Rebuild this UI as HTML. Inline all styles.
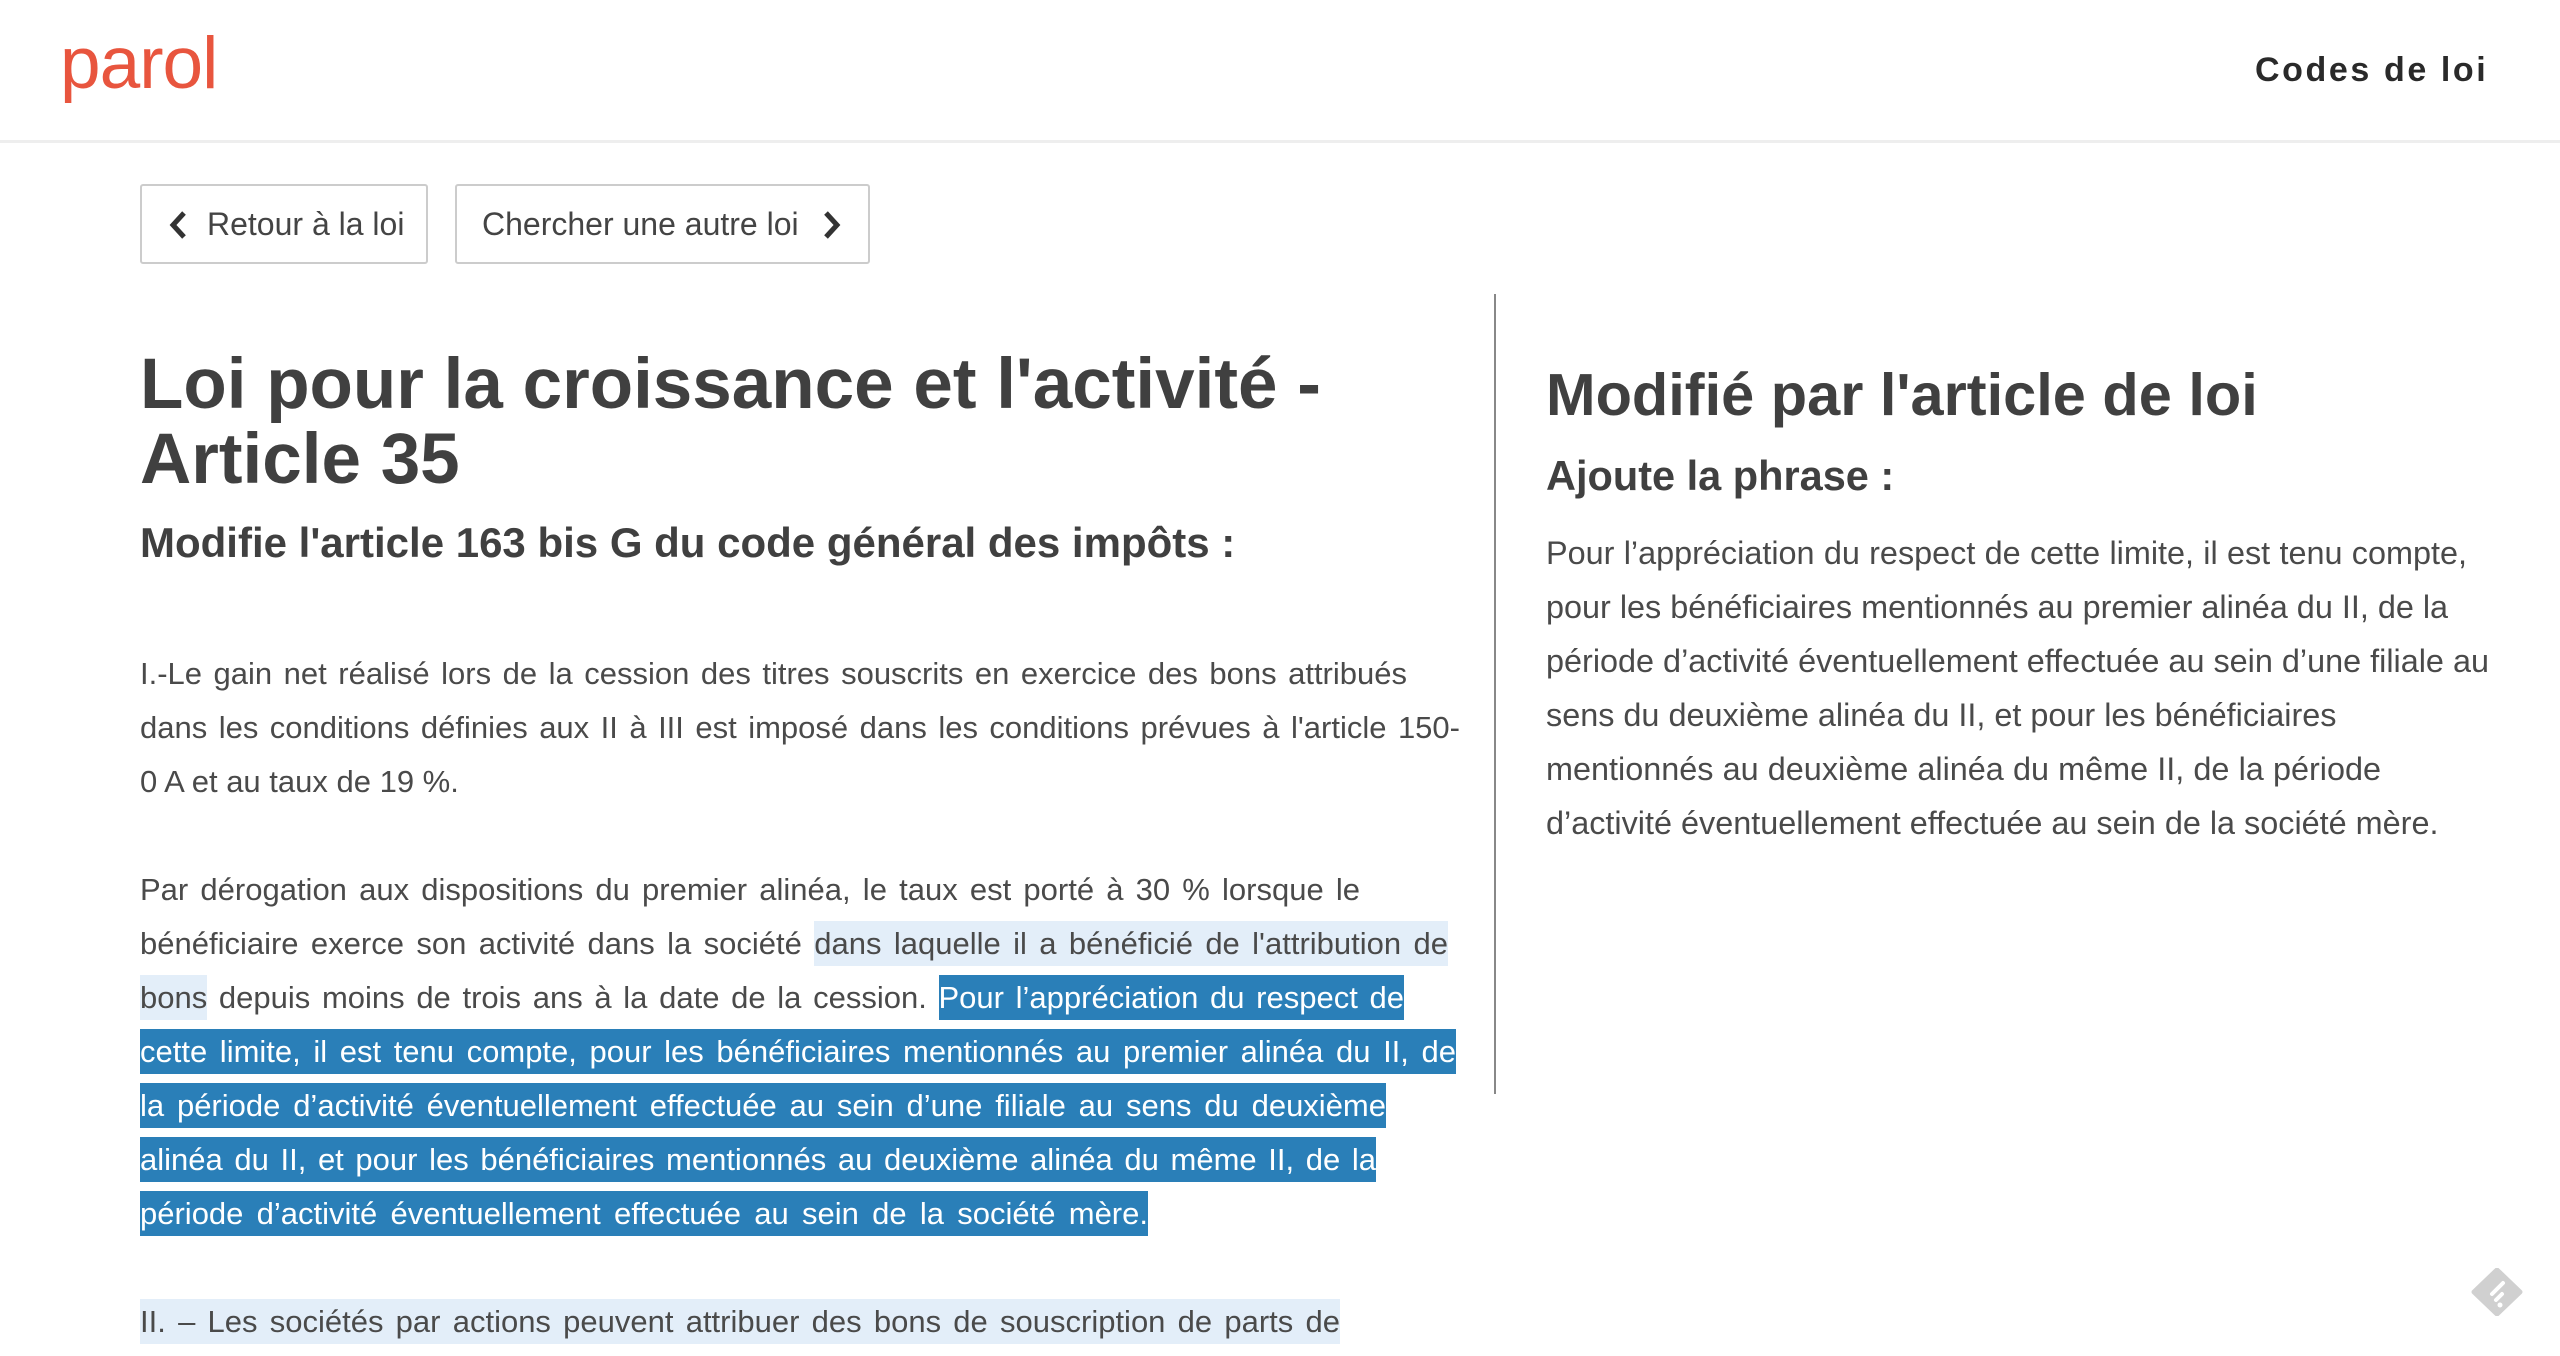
<!DOCTYPE html>
<html><head><meta charset="utf-8"><style>
html,body{margin:0;padding:0;background:#fff;width:2560px;height:1356px;overflow:hidden;position:relative;font-family:"Liberation Sans",sans-serif;color:#444}
.hdr{position:absolute;left:0;top:0;width:2560px;height:140px;border-bottom:3px solid #eee}
.logo{position:absolute;left:60px;top:22px;font-size:73px;color:#e8553e;letter-spacing:-1px}
.codes{position:absolute;left:2255px;top:51px;font-size:34px;font-weight:bold;letter-spacing:2.6px;color:#2a2a2a}
.btn{position:absolute;top:184px;height:80px;border:2px solid #ccc;border-radius:3px;box-sizing:border-box;font-size:32px;color:#444;line-height:76px;white-space:nowrap}
.p{position:absolute;font-size:31px;line-height:54px;color:#4a4a4a}
.p div{white-space:nowrap;text-align:justify;text-align-last:justify;height:54px}
.p div.n{text-align-last:left}
.lb{background:#e3eef9;padding:5px 0}
.db{background:#2a7fb8;color:#fff;padding:5px 0}
h1,h2,h3{margin:0;position:absolute;white-space:nowrap;color:#404040}
</style></head><body>
<div class="hdr"><div class="logo">parol</div><div class="codes">Codes de loi</div></div>

<div class="btn" style="left:140px;width:288px;">
<svg style="position:absolute;left:26px;top:24px" width="20" height="30" viewBox="0 0 20 30"><path d="M16 3 L5 15 L16 27" stroke="#333" stroke-width="5" fill="none"/></svg>
<span style="position:absolute;left:65px">Retour à la loi</span></div>
<div class="btn" style="left:455px;width:415px;">
<span style="position:absolute;left:25px">Chercher une autre loi</span>
<svg style="position:absolute;left:365px;top:24px" width="20" height="30" viewBox="0 0 20 30"><path d="M4 3 L15 15 L4 27" stroke="#333" stroke-width="5" fill="none"/></svg></div>

<h1 style="left:140px;top:347px;font-size:71px;line-height:75px;font-weight:bold">Loi pour la croissance et l'activité -<br>Article 35</h1>
<h3 style="left:140px;top:519px;font-size:42px;font-weight:bold">Modifie l'article 163 bis G du code général des impôts :</h3>

<div class="p" style="left:140px;top:647px">
<div style="width:1267px">I.-Le gain net réalisé lors de la cession des titres souscrits en exercice des bons attribués</div>
<div style="width:1320px">dans les conditions définies aux II à III est imposé dans les conditions prévues à l'article 150-</div>
<div class="n">0 A et au taux de 19 %.</div></div>

<div class="p" style="left:140px;top:863px">
<div style="width:1220px">Par dérogation aux dispositions du premier alinéa, le taux est porté à 30 % lorsque le</div>
<div style="width:1308px">bénéficiaire exerce son activité dans la société <span class="lb">dans laquelle il a bénéficié de l'attribution de</span></div>
<div style="width:1264px"><span class="lb">bons</span> depuis moins de trois ans à la date de la cession. <span class="db">Pour l’appréciation du respect de</span></div>
<div style="width:1316px"><span class="db">cette limite, il est tenu compte, pour les bénéficiaires mentionnés au premier alinéa du II, de</span></div>
<div style="width:1246px"><span class="db">la période d’activité éventuellement effectuée au sein d’une filiale au sens du deuxième</span></div>
<div style="width:1236px"><span class="db">alinéa du II, et pour les bénéficiaires mentionnés au deuxième alinéa du même II, de la</span></div>
<div style="width:1008px"><span class="db">période d’activité éventuellement effectuée au sein de la société mère.</span></div></div>

<div class="p" style="left:140px;top:1295px">
<div style="width:1200px"><span class="lb">II. – Les sociétés par actions peuvent attribuer des bons de souscription de parts de</span></div>
<div class="n"><span class="lb" style="display:inline-block;width:1310px;line-height:34px;vertical-align:middle">&nbsp;</span></div></div>

<div style="position:absolute;left:1494px;top:294px;width:2px;height:800px;background:#888"></div>

<h2 style="left:1546px;top:360px;font-size:59.5px;font-weight:bold">Modifié par l'article de loi</h2>
<h3 style="left:1546px;top:452px;font-size:41.5px;font-weight:bold">Ajoute la phrase :</h3>
<div class="p" style="left:1546px;top:526px;font-size:32.4px">
<div style="width:921px">Pour l’appréciation du respect de cette limite, il est tenu compte,</div>
<div style="width:902px">pour les bénéficiaires mentionnés au premier alinéa du II, de la</div>
<div style="width:941px">période d’activité éventuellement effectuée au sein d’une filiale au</div>
<div style="width:786px">sens du deuxième alinéa du II, et pour les bénéficiaires</div>
<div style="width:835px">mentionnés au deuxième alinéa du même II, de la période</div>
<div style="width:888px">d’activité éventuellement effectuée au sein de la société mère.</div></div>

<svg style="position:absolute;left:2470px;top:1268px" width="54" height="48" viewBox="0 0 54 48">
<path d="M27 2 L50 24 L27 46 L4 24 Z" fill="#d0d0d0" stroke="#d0d0d0" stroke-width="5" stroke-linejoin="round"/>
<path d="M22 26 L33 15" stroke="#fff" stroke-width="4" stroke-linecap="round"/>
<path d="M26 32 L32 26" stroke="#fff" stroke-width="4" stroke-linecap="round"/>
<circle cx="30" cy="37" r="2.5" fill="#fff"/></svg>
</body></html>
